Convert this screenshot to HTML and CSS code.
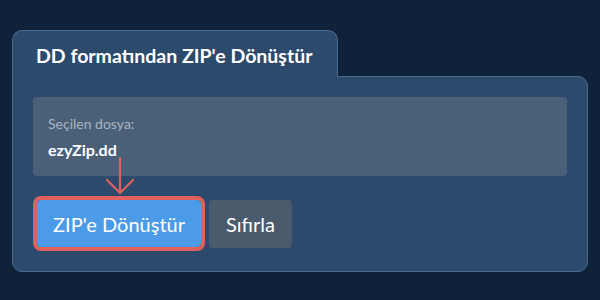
FILE: index.html
```html
<!DOCTYPE html>
<html lang="tr">

<head>
    <meta charset="UTF-8">
    <meta name="viewport" content="width=device-width, initial-scale=1.0">
    <title>DD formatından ZIP'e Dönüştür</title>
    <link rel="stylesheet" href="styles.css">
</head>

<body>
    <div class="converter">
        <div class="tab">DD formatından ZIP'e Dönüştür</div>
        <div class="panel">
            <div class="file_box">
                <div class="file_label">Seçilen dosya:</div>
                <div class="file_name">ezyZip.dd</div>
            </div>
            <div class="actions">
                <svg class="hint_arrow" width="30" height="40" viewBox="0 0 30 40">
                    <path d="M15 2 V37 M2 24 L15 37 L28 24" fill="none" stroke="#e0605e" stroke-width="2.2" stroke-linecap="round" stroke-linejoin="round"/>
                </svg>
                <button class="btn btn_primary">ZIP'e Dönüştür</button>
                <button class="btn btn_reset">Sıfırla</button>
            </div>
        </div>
    </div>
</body>

</html>
```

FILE: styles.css
```css
* {
    padding: 0;
    margin: 0;
    box-sizing: border-box;
}

html,
body {
    height: 100%;
}

body {
    background: #10223a;
    font-family: Lato, "Open Sans", sans-serif;
    color: #fff;
}

.converter {
    padding: 30px 12px 0;
}

.tab {
    position: relative;
    z-index: 1;
    width: 326px;
    height: 47px;
    margin-bottom: -1px;
    padding: 13px 0 0 23px;
    background: #2c4a6b;
    border: 1px solid #4a6a8e;
    border-bottom: none;
    border-radius: 10px 10px 0 0;
    font-size: 19.5px;
    font-weight: 700;
    line-height: 24px;
    white-space: nowrap;
}

.panel {
    background: #2c4a6b;
    border: 1px solid #4a6a8e;
    border-radius: 0 10px 10px 10px;
    padding: 20px 20px 23px;
}

.file_box {
    height: 79px;
    background: #4a6078;
    border-radius: 4px;
    padding: 18px 15px 0;
}

.file_label {
    font-size: 14px;
    line-height: 17px;
    color: #a8b5c4;
}

.file_name {
    margin-top: 8px;
    font-size: 16px;
    font-weight: 700;
    line-height: 20px;
}

.actions {
    position: relative;
    display: flex;
    gap: 8px;
    margin-top: 24px;
    padding-left: 4px;
}

.hint_arrow {
    position: absolute;
    left: 72px;
    top: -44px;
}

.btn {
    border: none;
    border-radius: 4px;
    padding: 0 10px;
    height: 47px;
    font-family: Lato, "Open Sans", sans-serif;
    font-size: 20px;
    color: #fff;
}

.btn_primary {
    width: 164px;
    background: #4c9be8;
    outline: 4px solid #e0605e;
}

.btn_reset {
    width: 83px;
    height: 48px;
    background: #4b5b6d;
}
```
